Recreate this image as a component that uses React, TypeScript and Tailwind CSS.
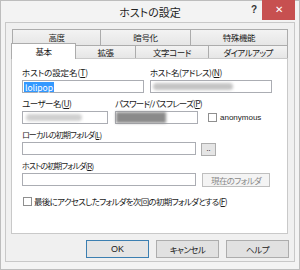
import React from "react";

const Acc = ({ text, acc, cls = "" }: { text: string; acc: string; cls?: string }) => (
  <span className={"whitespace-nowrap " + cls}>
    {text}(<span className="underline underline-offset-1">{acc}</span>)
  </span>
);

const Blur = ({ w, color }: { w: number; color: string }) => (
  <div
    className="h-[7px] blur-[1.5px] rounded-sm"
    style={{ width: w, background: color }}
  />
);

export default function App() {
  return (
    <div className="w-[300px] h-[270px] bg-[#f3f3f3] border border-[#bdbdbd] flex flex-col relative font-['Noto_Sans_CJK_JP',sans-serif] [font-feature-settings:'palt'] text-[8.5px] tracking-[-0.4px] text-[#1a1a1a]">
      {/* title bar */}
      <div className="h-[21px] flex items-center justify-center text-[11px] tracking-normal text-[#222] leading-none pt-[1px]">
        ホストの設定
      </div>
      <div className="absolute left-[250px] top-[4px] text-[10px] font-bold leading-none text-[#333] font-['Liberation_Sans',sans-serif]">
        ?
      </div>
      <div className="absolute right-[4px] top-[-1px] w-[33px] h-[20px] bg-[#c75050] flex items-center justify-center text-white text-[10px] leading-none font-['Liberation_Sans',sans-serif]">
        ✕
      </div>

      {/* client area */}
      <div className="ml-[4px] mr-[4px] mb-[7px] flex-1 border border-[#c8c8c8] bg-[#f0f0f0] flex flex-col">
        <div className="h-[6px]" />
        {/* upper tab row */}
        <div className="flex h-[16px] ml-[6px]">
          <div className="w-[88px] border-l border-t border-[#acacac] bg-linear-to-b from-[#f3f3f3] to-[#e6e6e6] flex justify-center pt-[1px] leading-[13px]">
            高度
          </div>
          <div className="w-[90px] border-l border-t border-[#acacac] bg-linear-to-b from-[#f3f3f3] to-[#e6e6e6] flex justify-center pt-[1px] leading-[13px]">
            暗号化
          </div>
          <div className="w-[98px] border-l border-t border-r border-[#acacac] bg-linear-to-b from-[#f3f3f3] to-[#e6e6e6] flex justify-center pt-[1px] leading-[13px]">
            特殊機能
          </div>
        </div>
        {/* lower tab row */}
        <div className="flex items-end h-[15px] -mt-[2px] ml-[5px] relative z-10">
          <div className="w-[65px] h-[16px] -mb-[1px] border-l border-t border-r border-[#acacac] bg-white flex items-center justify-center leading-none pb-[1px]">
            基本
          </div>
          <div className="w-[60px] h-[13px] border-t border-r border-[#acacac] bg-linear-to-b from-[#f3f3f3] to-[#e6e6e6] flex items-center justify-center leading-none">
            拡張
          </div>
          <div className="w-[73px] h-[13px] border-t border-r border-[#acacac] bg-linear-to-b from-[#f3f3f3] to-[#e6e6e6] flex items-center justify-center leading-none">
            文字コード
          </div>
          <div className="w-[79px] h-[13px] border-t border-r border-[#acacac] bg-linear-to-b from-[#f3f3f3] to-[#e6e6e6] flex items-center justify-center leading-none tracking-[-0.6px]">
            ダイアルアップ
          </div>
        </div>

        {/* panel */}
        <div className="ml-[5px] w-[277px] h-[176px] border border-[#c9c9c9] bg-white flex flex-col pl-[10px] pt-[7px]">
          {/* row 1 labels */}
          <div className="flex h-[13px] leading-[13px]">
            <div className="w-[128px]">
              <Acc text="ホストの設定名" acc="T" cls="tracking-[-0.1px]" />
            </div>
            <div>
              <Acc text="ホスト名(アドレス)" acc="N" cls="tracking-[-0.5px]" />
            </div>
          </div>
          <div className="flex mt-[1px] gap-[6px]">
            <div className="w-[122px] h-[13px] border border-[#abadb3] bg-white flex items-center pl-[1px]">
              <span className="bg-[#3399ff] text-white leading-[10px] px-[1px] tracking-normal">lolipop</span>
            </div>
            <div className="w-[122px] h-[13px] border border-[#abadb3] bg-white flex items-center pl-[2px]">
              <Blur w={80} color="#c4c4c4" />
            </div>
          </div>

          {/* row 2 */}
          <div className="flex h-[13px] leading-[13px] mt-[4px]">
            <div className="w-[93px]">
              <Acc text="ユーザー名" acc="U" cls="tracking-[-0.5px]" />
            </div>
            <div>
              <Acc text="パスワード/パスフレーズ" acc="P" cls="tracking-[-0.8px]" />
            </div>
          </div>
          <div className="flex items-center mt-[1px]">
            <div className="w-[86px] h-[13px] border border-[#abadb3] bg-white flex items-center pl-[3px]">
              <Blur w={56} color="#d0d0d0" />
            </div>
            <div className="ml-[7px] w-[83px] h-[13px] border border-[#abadb3] bg-white flex items-center">
              <div className="w-[50px] h-[11px] bg-[#8a8a8a] blur-[1.5px]" />
            </div>
            <div className="ml-[10px] w-[9px] h-[9px] border border-[#8f8f8f] bg-white" />
            <div className="ml-[3px] leading-none font-['Liberation_Sans',sans-serif] text-[8px] tracking-normal text-[#222]">
              anonymous
            </div>
          </div>

          {/* row 3 */}
          <div className="h-[13px] leading-[13px] mt-[4px]">
            <Acc text="ローカルの初期フォルダ" acc="L" cls="text-[8px] tracking-[-0.9px]" />
          </div>
          <div className="flex items-start mt-[1px]">
            <div className="w-[174px] h-[13px] border border-[#abadb3] bg-white" />
            <div className="ml-[5px] mt-[1px] w-[15px] h-[13px] border border-[#adadad] bg-[#e5e5e5] flex items-center justify-center leading-none text-[7px] tracking-normal pb-[2px]">
              ..
            </div>
          </div>

          {/* row 4 */}
          <div className="h-[13px] leading-[13px] mt-[3px]">
            <Acc text="ホストの初期フォルダ" acc="R" cls="text-[8px] tracking-[-0.9px]" />
          </div>
          <div className="flex items-start mt-[1px]">
            <div className="w-[174px] h-[13px] border border-[#abadb3] bg-white" />
            <div className="ml-[6px] w-[68px] h-[14px] border border-[#bfbfbf] bg-[#f4f4f4] flex items-center justify-center leading-none text-[#8a8a8a] tracking-[-0.7px]">
              現在のフォルダ
            </div>
          </div>

          {/* checkbox row */}
          <div className="flex items-center h-[13px] mt-[8px]">
            <div className="ml-[1px] w-[9px] h-[9px] border border-[#8f8f8f] bg-white" />
            <div className="ml-[2px] leading-none">
              <Acc text="最後にアクセスしたフォルダを次回の初期フォルダとする" acc="F" cls="tracking-[-0.7px]" />
            </div>
          </div>
        </div>

        {/* buttons */}
        <div className="flex justify-end gap-[7px] mr-[5px] mt-[6px]">
          <div className="w-[63px] h-[18px] border border-[#3c7fb1] bg-[#e5e5e5] flex items-center justify-center leading-none font-['Liberation_Sans',sans-serif] text-[9px] tracking-normal">
            OK
          </div>
          <div className="w-[63px] h-[18px] border border-[#adadad] bg-[#e1e1e1] flex items-center justify-center leading-none tracking-[-0.6px]">
            キャンセル
          </div>
          <div className="w-[63px] h-[18px] border border-[#adadad] bg-[#e1e1e1] flex items-center justify-center leading-none">
            ヘルプ
          </div>
        </div>
      </div>
    </div>
  );
}
